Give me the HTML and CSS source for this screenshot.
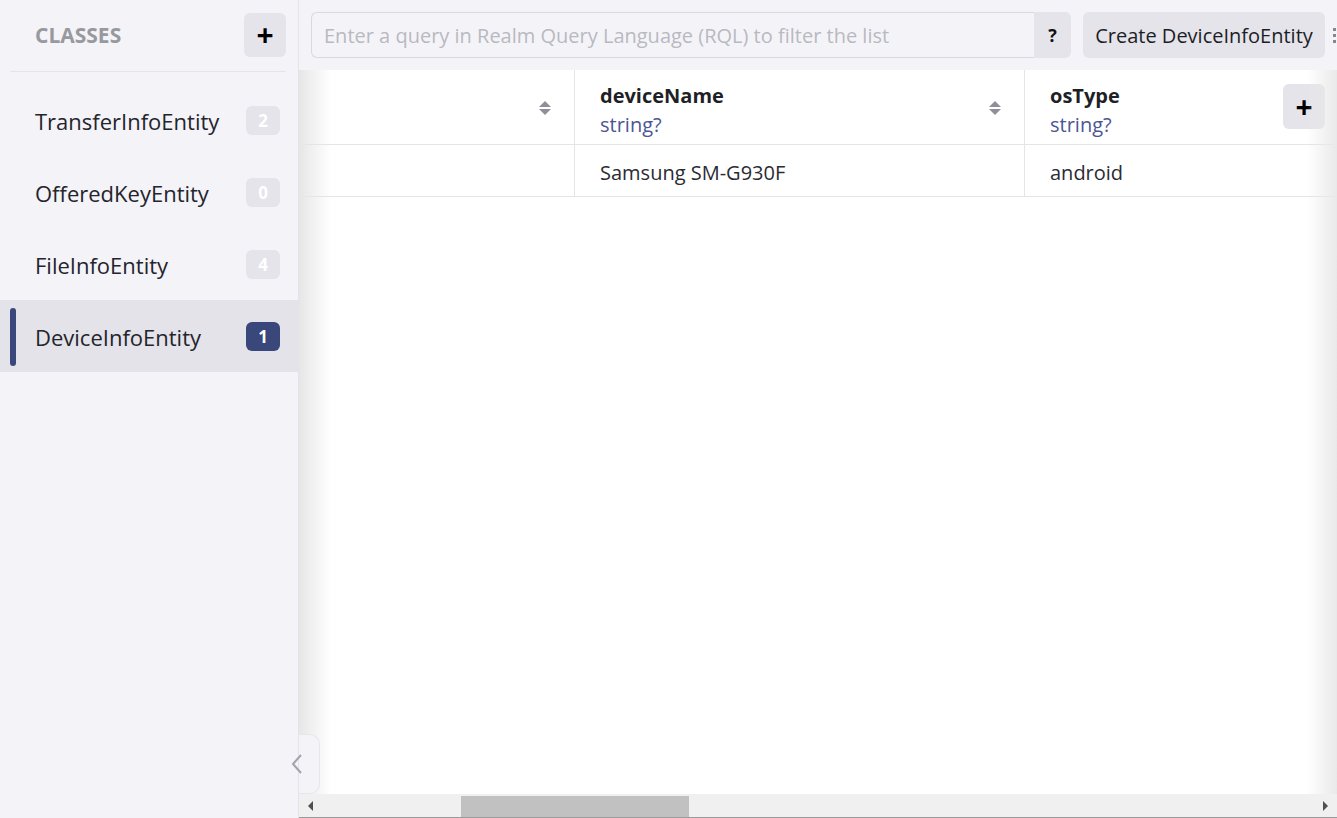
FILE: index.html
```html
<!DOCTYPE html>
<html lang="en">
<head>
    <meta charset="UTF-8">
    <title>Realm Studio</title>
    <link rel="stylesheet" href="styles.css">
</head>
<body>
    <div class="sidebar">
        <div class="sidebar-head">
            <span class="sidebar-title">CLASSES</span>
            <button class="icon-btn">+</button>
        </div>
        <ul class="class-list">
            <li><span>TransferInfoEntity</span><span class="badge">2</span></li>
            <li><span>OfferedKeyEntity</span><span class="badge">0</span></li>
            <li><span>FileInfoEntity</span><span class="badge">4</span></li>
            <li class="active"><span>DeviceInfoEntity</span><span class="badge">1</span></li>
        </ul>
    </div>

    <div class="content">
        <div class="toolbar">
            <div class="query">
                <input type="text" placeholder="Enter a query in Realm Query Language (RQL) to filter the list">
                <button class="help-btn">?</button>
            </div>
            <button class="create-btn">Create DeviceInfoEntity</button>
            <span class="more"></span>
        </div>

        <div class="grid">
            <table>
                <thead>
                    <tr>
                        <th class="col-a"><span class="sort"></span></th>
                        <th class="col-b">
                            <div class="col-name">deviceName</div>
                            <div class="col-type">string?</div>
                            <span class="sort"></span>
                        </th>
                        <th class="col-c">
                            <div class="col-name">osType</div>
                            <div class="col-type">string?</div>
                        </th>
                    </tr>
                </thead>
                <tbody>
                    <tr>
                        <td class="col-a"></td>
                        <td class="col-b">Samsung SM-G930F</td>
                        <td class="col-c">android</td>
                    </tr>
                </tbody>
            </table>
            <button class="icon-btn add-col">+</button>
            <div class="shade-left"></div>
            <div class="shade-right"></div>
        </div>

        <div class="hscroll">
            <span class="arrow left"></span>
            <div class="track"><div class="thumb"></div></div>
            <span class="arrow right"></span>
        </div>

        <div class="collapse-tab">
            <svg width="12" height="22" viewBox="0 0 12 22"><path d="M10 2 L2 11 L10 20" fill="none" stroke="#a3a3ad" stroke-width="2"/></svg>
        </div>
    </div>
</body>
</html>
```

FILE: styles.css
```css
body {
    margin: 0;
    height: 100vh;
    display: flex;
    overflow: hidden;
    font-family: "Segoe UI", "Open Sans", "Noto Sans", sans-serif;
    color: #24242c;
    background: #f3f3f8;
}
button {
    font-family: inherit;
    border: none;
    cursor: pointer;
}
.icon-btn {
    width: 42px;
    height: 44px;
    background: #e4e4ea;
    border-radius: 6px;
    font-size: 30px;
    font-weight: bold;
    line-height: 44px;
    padding: 0;
    color: #000;
}

/* sidebar */
.sidebar {
    width: 298px;
    flex-shrink: 0;
    border-right: 1px solid #e3e3e9;
    background: #f3f3f8;
}
.sidebar-head {
    display: flex;
    align-items: center;
    justify-content: space-between;
    margin: 0 12px 0 10px;
    padding: 13px 0 14px 25px;
    border-bottom: 1px solid #e4e4ea;
}
.sidebar-title {
    font-size: 21px;
    font-weight: bold;
    color: #98989f;
}
.class-list {
    list-style: none;
    margin: 12px 0 0;
    padding: 0;
}
.class-list li {
    position: relative;
    height: 72px;
    display: flex;
    align-items: center;
    justify-content: space-between;
    padding: 0 18px 0 35px;
    font-size: 22px;
}
.class-list li > span:first-child {
    padding-top: 2px;
}
.class-list li.active {
    background: #e3e3e9;
}
.class-list li.active::before {
    content: "";
    position: absolute;
    left: 10px;
    top: 8px;
    bottom: 6px;
    width: 6px;
    border-radius: 3px;
    background: #39477a;
}
.badge {
    min-width: 34px;
    height: 29px;
    border-radius: 6px;
    background: #e4e4ea;
    color: #fff;
    font-size: 17px;
    font-weight: bold;
    text-align: center;
    line-height: 29px;
}
.active .badge {
    background: #39477a;
}

/* main */
.content {
    position: relative;
    flex: 1;
    display: flex;
    flex-direction: column;
    min-width: 0;
}
.toolbar {
    display: flex;
    align-items: center;
    gap: 12px;
    padding: 12px 0 12px 12px;
    height: 46px;
}
.toolbar > * {
    flex-shrink: 0;
}
.query {
    display: flex;
    width: 760px;
    height: 46px;
}
.query input {
    flex: 1;
    border: 1px solid #d9d9df;
    border-right: none;
    border-radius: 6px 0 0 6px;
    background: #f4f4f8;
    font-family: inherit;
    font-size: 20px;
    padding: 0 12px;
    outline: none;
}
.query input::placeholder {
    color: #b9b9c1;
}
.help-btn {
    width: 37px;
    background: #e4e4ea;
    border-radius: 0 6px 6px 0;
    font-size: 18px;
    font-weight: bold;
    color: #111;
}
.create-btn {
    height: 46px;
    width: 242px;
    background: #e4e4ea;
    border-radius: 6px;
    font-size: 20px;
    color: #1d1d26;
}
.more {
    width: 3px;
    height: 3px;
    margin-left: -4px;
    background: #888;
    box-shadow: 0 -6px 0 #888, 0 6px 0 #888;
}

.grid {
    flex: 1;
    position: relative;
    background: #fff;
    overflow: hidden;
}
table {
    border-collapse: collapse;
    table-layout: fixed;
    width: 1200px;
}
th, td {
    text-align: left;
    border-bottom: 1px solid #e4e4e9;
    border-right: 1px solid #e4e4e9;
    padding: 0 25px;
    font-size: 20px;
}
th {
    position: relative;
    height: 66px;
    padding-top: 8px;
    vertical-align: middle;
}
td {
    height: 47px;
    padding-top: 4px;
    color: #2b2b33;
}
.col-a { width: 225px; }
.col-b { width: 399px; }
.col-c { border-right: none; }
.col-name {
    font-weight: bold;
    color: #1f1f27;
    line-height: 28px;
}
.col-type {
    font-weight: normal;
    color: #4b5694;
    line-height: 30px;
}
.sort {
    position: absolute;
    right: 23px;
    top: 31px;
    width: 0;
    height: 0;
    border-left: 6px solid transparent;
    border-right: 6px solid transparent;
    border-bottom: 6px solid #8f8f99;
}
.sort::after {
    content: "";
    position: absolute;
    left: -6px;
    top: 8px;
    border-left: 6px solid transparent;
    border-right: 6px solid transparent;
    border-top: 6px solid #8f8f99;
}
.add-col {
    position: absolute;
    top: 14px;
    right: 12px;
    height: 45px;
}
.shade-left {
    position: absolute;
    left: 0;
    top: 0;
    bottom: 0;
    width: 32px;
    background: linear-gradient(to right, #e6e6e6, rgba(255,255,255,0));
}
.shade-right {
    position: absolute;
    right: 0;
    top: 0;
    bottom: 0;
    width: 30px;
    background: linear-gradient(to left, #e9e9e9, rgba(255,255,255,0));
}
.collapse-tab {
    position: absolute;
    left: -8px;
    bottom: 24px;
    width: 29px;
    height: 60px;
    display: flex;
    align-items: center;
}
.collapse-tab::before {
    content: "";
    position: absolute;
    left: 8px;
    top: 0;
    right: 0;
    bottom: 0;
    background: #f3f3f8;
    border: 1px solid #e6e6ec;
    border-left: none;
    border-radius: 0 10px 10px 0;
}
.collapse-tab svg {
    position: relative;
}

.hscroll {
    height: 23px;
    display: flex;
    align-items: center;
    background: #f0f0f0;
    border-bottom: 1px solid #9a9a9a;
}
.track {
    flex: 1;
    height: 100%;
    position: relative;
}
.thumb {
    position: absolute;
    left: 139px;
    width: 228px;
    top: 2px;
    bottom: 0;
    background: #c1c1c1;
}
.arrow {
    width: 0;
    height: 0;
    border-top: 5px solid transparent;
    border-bottom: 5px solid transparent;
    margin: 0 9px;
}
.arrow.left { border-right: 5px solid #505050; }
.arrow.right { border-left: 5px solid #505050; }
```
